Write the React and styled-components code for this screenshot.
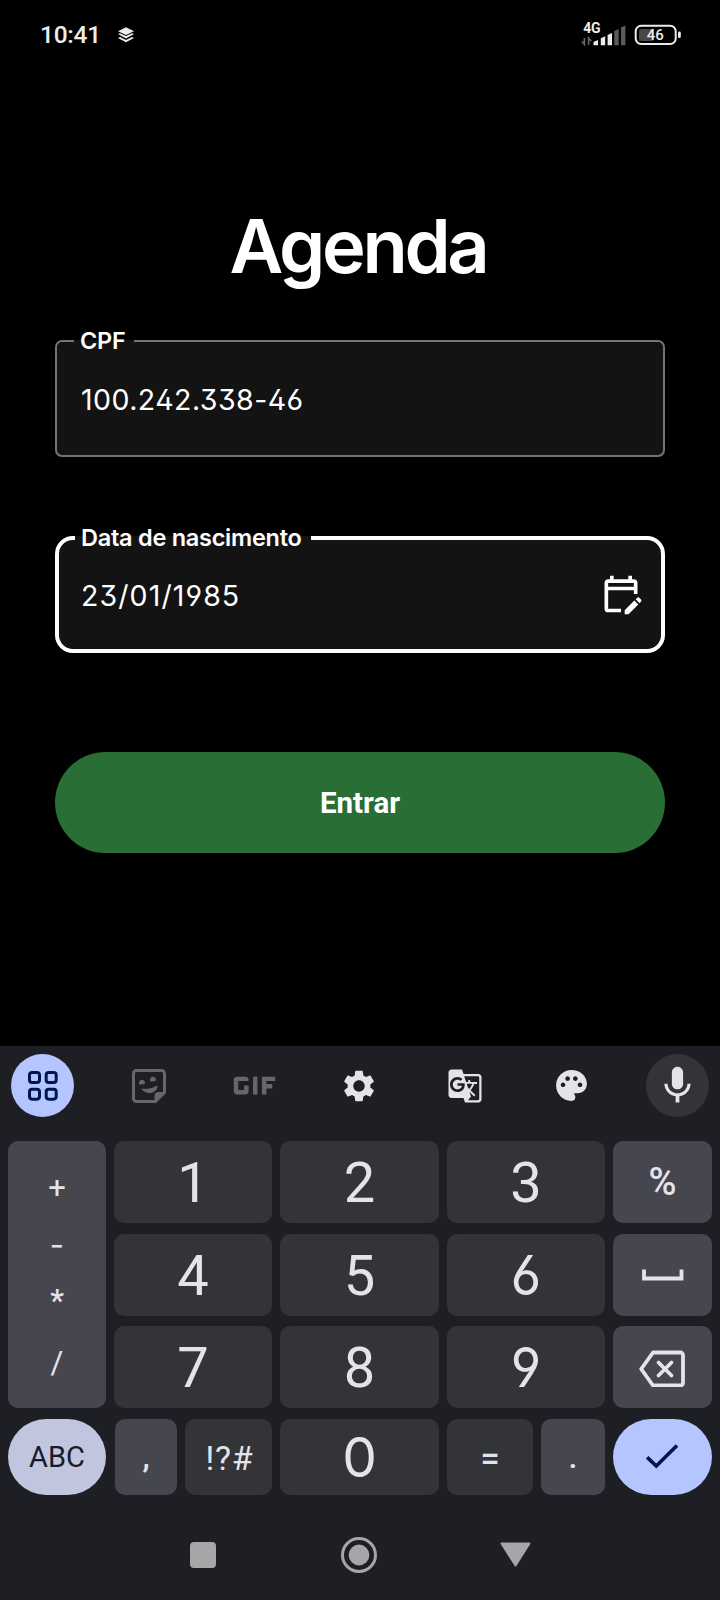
import React from "react";
import styled, { createGlobalStyle } from "styled-components";
import {
  MdGif,
  MdSettings,
  MdGTranslate,
  MdPalette,
  MdMic,
  MdOutlineEditCalendar,
} from "react-icons/md";

const GlobalStyle = createGlobalStyle`
  *, *::before, *::after { box-sizing: border-box; }
  body { margin: 0; background: #000; }
  svg { display: block; }
`;

const Screen = styled.div`
  width: 720px;
  height: 1600px;
  display: flex;
  flex-direction: column;
  overflow: hidden;
  background: #000;
  color: #fff;
  font-family: Inter, sans-serif;
  font-feature-settings: "ss01", "ss03";
`;

const StatusBar = styled.header`
  height: 70px;
  padding: 0 38px 0 40px;
  display: flex;
  align-items: center;
  color: #ececec;
  font-family: Roboto, sans-serif;
`;

const Clock = styled.span`
  width: 77px;
  font-size: 24.5px;
  font-weight: 500;
  letter-spacing: -0.25px;
  line-height: 30px;
`;

const StatusIcons = styled.div`
  margin-left: auto;
`;

const Login = styled.main`
  height: 976px;
  padding: 134px 55px 0;
  display: flex;
  flex-direction: column;
`;

const Title = styled.h1`
  margin: 0;
  height: 84px;
  padding-right: 4px;
  text-align: center;
  font-size: 74px;
  line-height: 84px;
  font-weight: 600;
  letter-spacing: -3.3px;
`;

const Field = styled.fieldset`
  margin: ${(p) => p.$top}px 0 0;
  height: ${(p) => (p.$focused ? 130.5 : 131)}px;
  min-width: 0;
  padding: 0 16px 0 ${(p) => (p.$focused ? 16 : 17)}px;
  border: ${(p) => (p.$focused ? "4px solid #fff" : "2px solid #747474")};
  border-radius: ${(p) => (p.$focused ? 18 : 7)}px;
  background: #131313;
`;

const FieldLabel = styled.legend`
  width: ${(p) => p.$width}px;
  height: 30px;
  padding: 0 0 0 6px;
  white-space: nowrap;
  font-size: 23.5px;
  line-height: 30px;
  font-weight: 600;
  letter-spacing: ${(p) => p.$spacing}px;
`;

const FieldRow = styled.div`
  height: ${(p) => p.$height}px;
  padding-left: ${(p) => p.$inset}px;
  display: flex;
  align-items: center;
  justify-content: space-between;

  svg {
    margin: 0 2px 3px 0;
  }
`;

const Value = styled.span`
  font-size: 28.5px;
  line-height: 36px;
  letter-spacing: ${(p) => p.$spacing}px;
`;

const SubmitButton = styled.button`
  margin: 99px 0 0;
  height: 101px;
  padding: 0;
  border: 0;
  border-radius: 51px;
  background: #296e34;
  color: #fff;
  font: 700 29.5px/36px Roboto, sans-serif;
`;

const Keyboard = styled.section`
  flex: 1;
  background: #1e1f24;
  color: #e3e3e9;
`;

const Toolbar = styled.div`
  height: 95px;
  padding: 8px 11px 0;
  display: flex;
  justify-content: space-between;
`;

const tones = {
  plain: ["transparent", "#e3e3e9"],
  dim: ["transparent", "#66676b"],
  accent: ["#b4c5ff", "#00174d"],
  raised: ["#333438", "#e3e3e9"],
};

const ToolButton = styled.div`
  width: 63px;
  height: 63px;
  border-radius: 50%;
  display: flex;
  align-items: center;
  justify-content: center;
  padding-right: ${(p) => (p.$tone === "plain" ? 1 : 0)}px;
  background: ${(p) => tones[p.$tone][0]};
  color: ${(p) => tones[p.$tone][1]};
  svg { flex: none; }
`;

const KeyGrid = styled.div`
  padding: 0 8px;
  display: grid;
  grid-template-columns: 98px 158px 159px 158px 99px;
  grid-template-rows: 82px 82px 82px 76.5px;
  gap: 10.5px 8px;
`;

const Key = styled.div`
  display: flex;
  align-items: center;
  justify-content: center;
  border-radius: 10px;
  background: #333438;
  font-size: 56px;
  line-height: 60px;
  font-family: Roboto, sans-serif;
`;

const Digit = styled.span`
  margin-top: 2px;
`;

const RoundDigit = styled(Digit)`
  margin-top: 0;
  font-family: Inter, sans-serif;
  font-size: 55px;
  font-weight: 400;
  transform: scaleX(${(p) => p.$narrow || 1});
`;

const SymbolKey = styled(Key)`
  background: ${(p) => (p.$soft ? "#46464f" : "#333438")};
  font-size: ${(p) => p.$size || 34}px;
  font-weight: ${(p) => p.$weight || 500};
  letter-spacing: ${(p) => p.$spacing || 0}px;
  padding: ${(p) => p.$pad || "0"};
`;

const PillKey = styled(Key)`
  border-radius: 44px;
  background: ${(p) => (p.$primary ? "#b4c5ff" : "#c1c5dd")};
  color: ${(p) => (p.$primary ? "#00174d" : "#171b2c")};
  font-size: 29px;
`;

const OperatorColumn = styled.div`
  grid-row: 1 / 4;
  border-radius: 10px;
  background: #46464f;
  padding: 19px 0 10px;
  display: grid;
  grid-template-rows: 56px 58px 53px 1fr;
  justify-items: center;
  align-items: center;
  font: 400 31px/40px Roboto, sans-serif;
`;

const Dash = styled.span`
  font-family: Inter, sans-serif;
`;

const Asterisk = styled.span`
  font-weight: 500;
`;

const SplitCell = styled.div`
  display: grid;
  grid-template-columns: ${(p) => p.$columns};
  padding-left: ${(p) => p.$inset || 0}px;
  gap: 8px;
`;

const NavBar = styled.nav`
  height: 105px;
  padding: 14px 189px 0 190px;
  display: flex;
  align-items: center;
  justify-content: space-between;
  color: #a5a6a8;
`;

const NavSquare = styled.div`
  width: 26px;
  height: 26px;
  margin-right: 2px;
  border-radius: 4px;
  background: currentColor;
`;

const LayersIcon = () => (
  <svg width="18" height="16" viewBox="0 0 18 16" fill="#ececec">
    <path d="M9 0.3 17 4.2 9 8 1 4.2Z" />
    <path d="M1 7 3 6.2 9 9.1 15 6.2 17 7 9 11.4Z" />
    <path d="M1 10.9 3 10.1 9 13 15 10.1 17 10.9 9 15.2Z" />
  </svg>
);

const SignalAndBattery = () => (
  <svg width="101" height="40" viewBox="581 14 101 40" fontFamily="Roboto, sans-serif">
    <text x="583.2" y="32.3" fontSize="14" fontWeight="700" letterSpacing="-0.3" fill="#ececec">4G</text>
    <g fill="none" stroke="#666" strokeWidth="1.6">
      <path d="M584.4 37v6.4l-2.6-3M588.6 44v-7l2.6 3" />
    </g>
    <g fill="#ececec">
      <path d="M593.5 44.3v-3.4l4.5-1.8V44.3Z" />
      <path d="M600.8 44.3v-7.1l4.4-2V44.3Z" />
      <path d="M607.6 44.3V34l4.4-2v12.3Z" />
    </g>
    <g fill="#5b5b5b">
      <path d="M614.3 44.3V30l4.4-2v16.3Z" />
      <path d="M621 44.3V26.5l4.400-2V44.3Z" />
    </g>
    <rect x="635.7" y="24.8" width="40" height="18.2" rx="5.5" fill="none" stroke="#ececec" strokeWidth="2" />
    <path d="M639 30a2 2 0 0 1 2-2h12v12h-12a2 2 0 0 1-2-2Z" fill="#474747" />
    <rect x="678" y="30.5" width="2.8" height="6.5" rx="1.3" fill="#ececec" />
    <text x="655.3" y="39.3" fontSize="15" fontWeight="500" textAnchor="middle" fill="#ececec">46</text>
  </svg>
);

const AppsIcon = () => (
  <svg width="30" height="30" viewBox="0 0 30 30" fill="none" stroke="currentColor" strokeWidth="3">
    <rect x="1.5" y="1.5" width="10" height="10" rx="2.6" />
    <rect x="18.2" y="1.5" width="10" height="10" rx="2.6" />
    <rect x="1.5" y="18.2" width="10" height="10" rx="2.6" />
    <rect x="18.2" y="18.2" width="10" height="10" rx="2.6" />
  </svg>
);

const StickerIcon = () => (
  <svg width="35" height="34" viewBox="-1 0 35 34">
    <path d="M23.5 32.5H4.5a3 3 0 0 1-3-3V4.5a3 3 0 0 1 3-3h25a3 3 0 0 1 3 3v19Z" fill="none" stroke="currentColor" strokeWidth="3" strokeLinejoin="round" />
    <path d="M22.5 33v-6a4 4 0 0 1 4-4h6.5Z" fill="currentColor" />
    <path d="M9.5 19.5q8 1.5 16-3c.2 4.2-3.200 7.200-7 7.500-4 .3-7.500-1.500-9-4.500Z" fill="currentColor" />
    <path d="M7 15.300c-.6-5.500 5.500-6 6.300-.8-2 .9-4.300 1.300-6.300.8ZM18 12.300c-.6-5.500 5.500-6 6.300-.8-2 .9-4.300 1.300-6.300.8Z" fill="currentColor" />
  </svg>
);

const SpaceIcon = () => (
  <svg width="42" height="12" viewBox="0 0 42 12" fill="none" stroke="currentColor" strokeWidth="3.8">
    <path d="M2 0.5V9.5H39.5V0.5" />
  </svg>
);

const BackspaceIcon = () => (
  <svg width="47" height="37" viewBox="0 0 47 37" fill="none" stroke="currentColor" strokeWidth="3.8">
    <path d="M14 2.5h27.5a2.5 2.5 0 0 1 2.5 2.5v28a2.5 2.5 0 0 1-2.5 2.5H14L2.2 19Z" strokeLinejoin="round" />
    <path d="M19.5 12.5l13 13M32.5 12.5l-13 13" strokeLinecap="round" />
  </svg>
);

const CheckIcon = () => (
  <svg width="34" height="25" viewBox="0 0 34 25" fill="none" stroke="currentColor" strokeWidth="3.6">
    <path d="M1.2 13.3 10.3 22 31 1.5" />
  </svg>
);

const HomeIcon = () => (
  <svg width="36" height="36" viewBox="0 0 36 36">
    <circle cx="18" cy="18" r="16.5" fill="none" stroke="currentColor" strokeWidth="3" />
    <circle cx="18" cy="18" r="10.4" fill="currentColor" />
  </svg>
);

const BackIcon = () => (
  <svg width="31" height="25" viewBox="0 0 31 25">
    <path d="M1.5 1.5h28L15.5 23.5Z" fill="currentColor" stroke="currentColor" strokeWidth="2" strokeLinejoin="round" />
  </svg>
);

const tools = [
  ["accent", <AppsIcon />],
  ["dim", <StickerIcon />],
  ["dim", <MdGif size={71} />],
  ["plain", <MdSettings size={38} />],
  ["plain", <MdGTranslate size={36} />],
  ["plain", <MdPalette size={37} />],
  ["raised", <MdMic size={45} />],
];

export default function App() {
  return (
    <Screen>
      <GlobalStyle />
      <StatusBar>
        <Clock>10:41</Clock>
        <LayersIcon />
        <StatusIcons>
          <SignalAndBattery />
        </StatusIcons>
      </StatusBar>

      <Login>
        <Title>Agenda</Title>
        <Field $top={38}>
          <FieldLabel $width={60} $spacing={-0.2}>CPF</FieldLabel>
          <FieldRow $height={88} $inset={7}>
            <Value $spacing={0.45}>100.242.338-46</Value>
          </FieldRow>
        </Field>
        <Field $top={65.5} $focused>
          <FieldLabel $width={236} $spacing={-0.26}>Data de nascimento</FieldLabel>
          <FieldRow $height={86} $inset={6}>
            <Value $spacing={1.1}>23/01/1985</Value>
            <MdOutlineEditCalendar size={44} />
          </FieldRow>
        </Field>
        <SubmitButton type="button">Entrar</SubmitButton>
      </Login>

      <Keyboard>
        <Toolbar>
          {tools.map(([tone, icon], i) => (
            <ToolButton key={i} $tone={tone}>{icon}</ToolButton>
          ))}
        </Toolbar>
        <KeyGrid>
          <OperatorColumn>
            <span>+</span>
            <Dash>-</Dash>
            <Asterisk>*</Asterisk>
            <span>/</span>
          </OperatorColumn>
          <Key><Digit>1</Digit></Key>
          <Key><Digit>2</Digit></Key>
          <Key><Digit>3</Digit></Key>
          <SymbolKey $soft $size={38}>%</SymbolKey>
          <Key><Digit>4</Digit></Key>
          <Key><Digit>5</Digit></Key>
          <Key><RoundDigit $narrow={0.95}>6</RoundDigit></Key>
          <SymbolKey $soft><SpaceIcon /></SymbolKey>
          <Key><Digit>7</Digit></Key>
          <Key><Digit>8</Digit></Key>
          <Key><RoundDigit $narrow={0.95}>9</RoundDigit></Key>
          <SymbolKey $soft $pad="3px 0 0"><BackspaceIcon /></SymbolKey>
          <PillKey>ABC</PillKey>
          <SplitCell $columns="62px 1fr" $inset={1}>
            <SymbolKey $soft $size={32}>,</SymbolKey>
            <SymbolKey $weight={400} $spacing={0.7} $pad="2px 0 0 2px">!?#</SymbolKey>
          </SplitCell>
          <Key><RoundDigit>0</RoundDigit></Key>
          <SplitCell $columns="1fr 64px">
            <SymbolKey $size={34} $pad="2px 0 0">=</SymbolKey>
            <SymbolKey $soft $size={32}>.</SymbolKey>
          </SplitCell>
          <PillKey $primary><CheckIcon /></PillKey>
        </KeyGrid>
        <NavBar>
          <NavSquare />
          <HomeIcon />
          <BackIcon />
        </NavBar>
      </Keyboard>
    </Screen>
  );
}
